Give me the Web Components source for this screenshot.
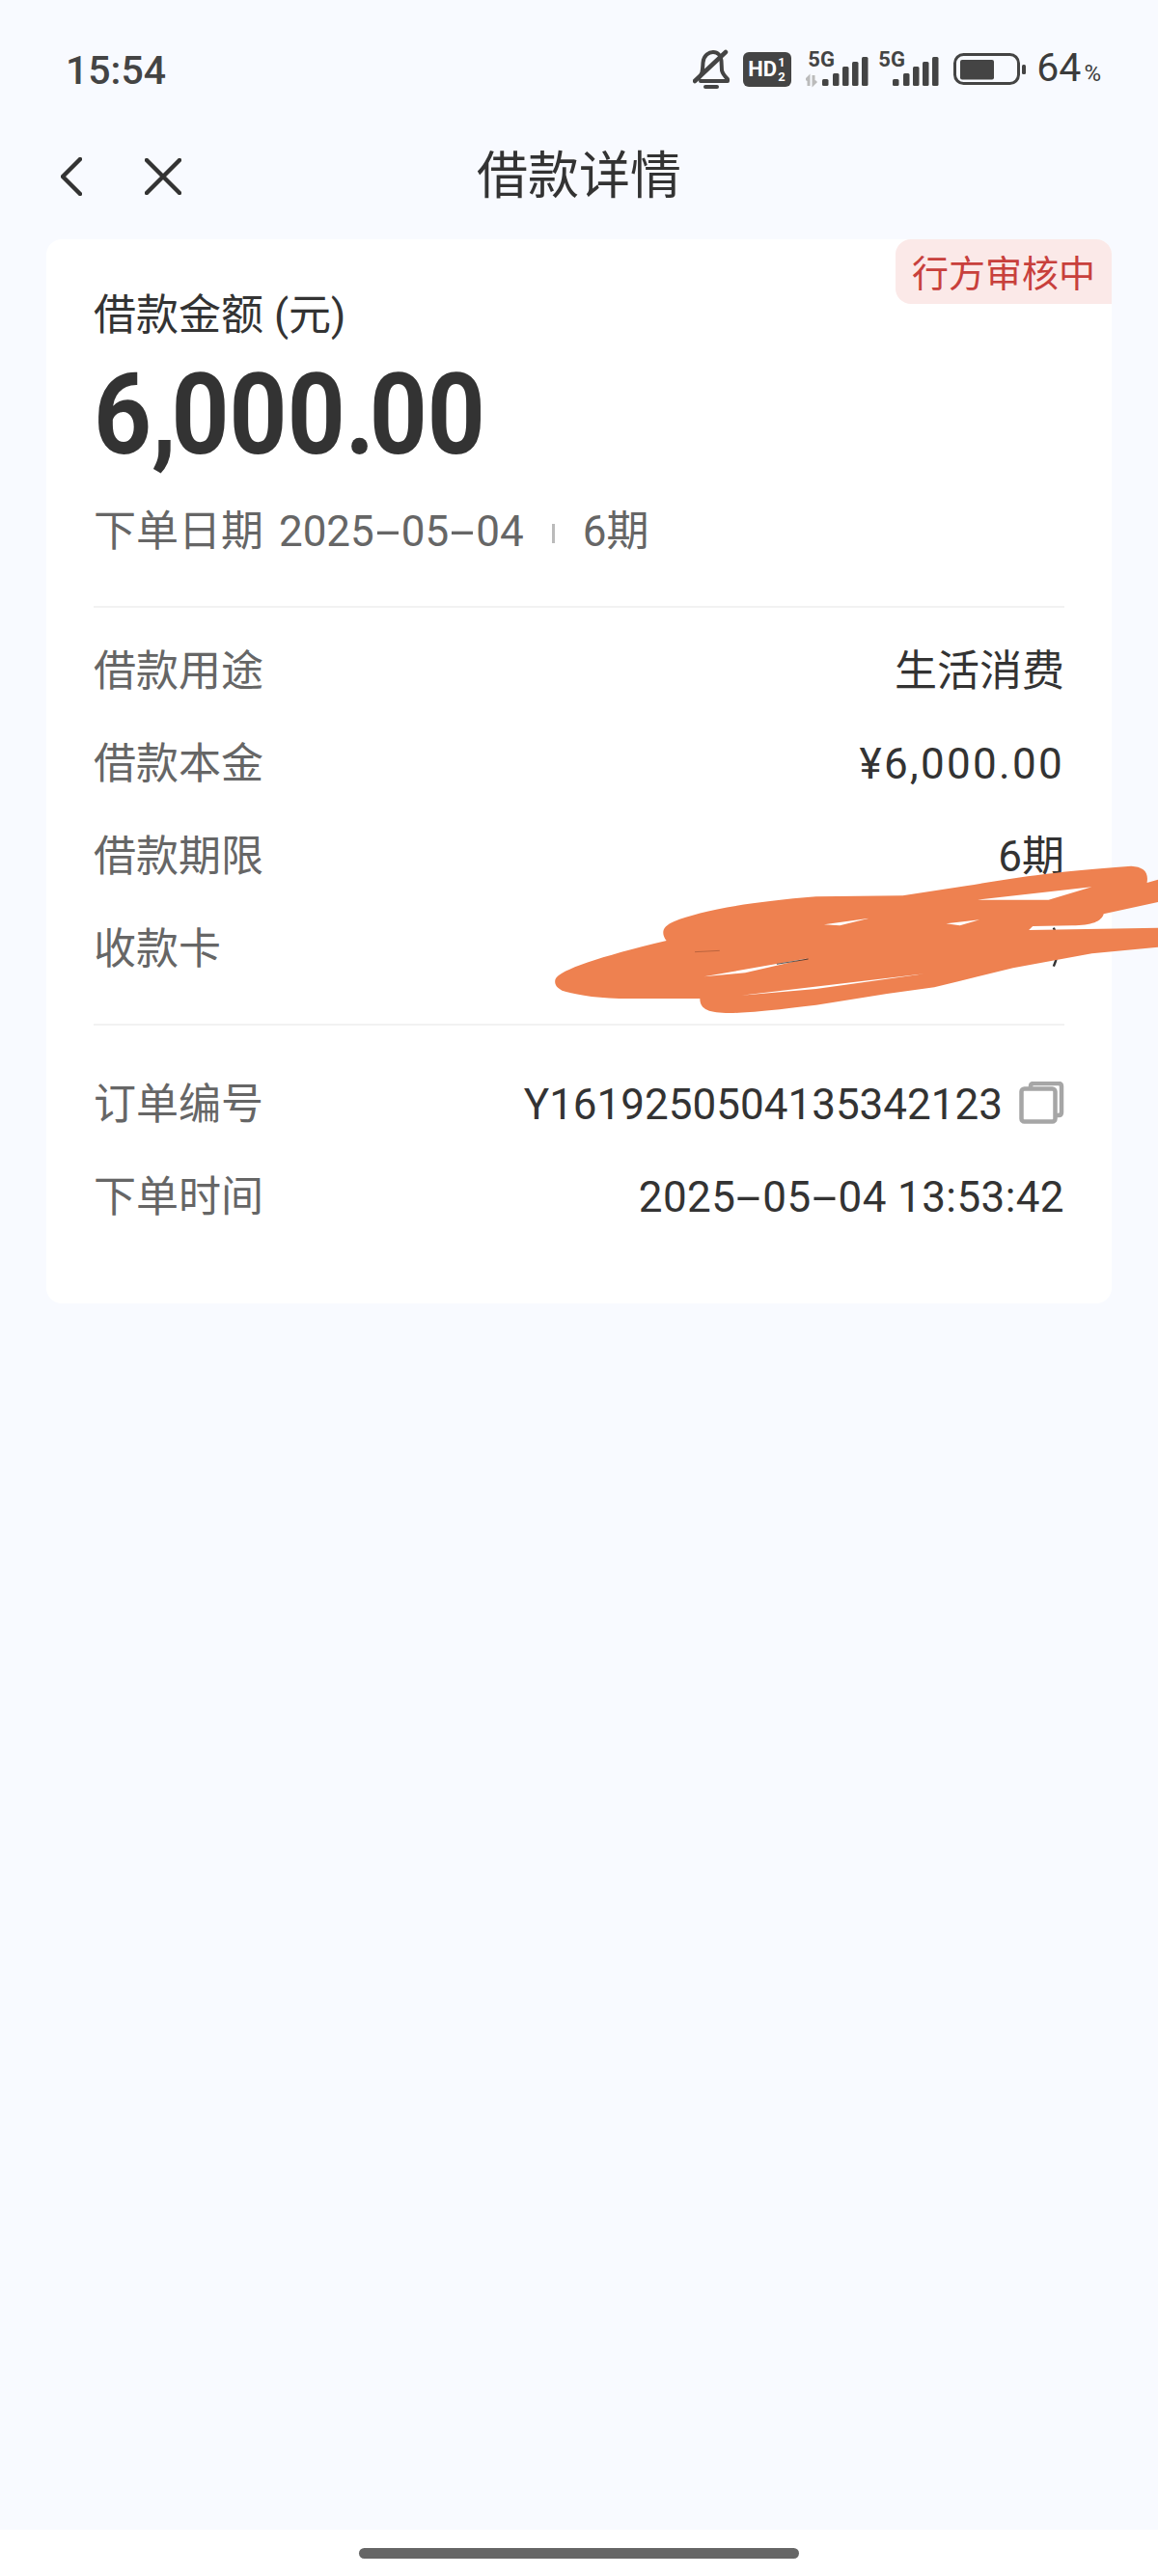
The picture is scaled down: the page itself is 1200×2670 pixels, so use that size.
<!DOCTYPE html>
<html lang="zh">
<head>
<meta charset="utf-8">
<title>借款详情</title>
<style>
	html, body { margin: 0; padding: 0; }
	body {
		width: 1200px;
		height: 2670px;
		overflow: hidden;
		background: #f8faff;
		font-family: Roboto, "Noto Sans CJK SC", sans-serif;
	}
</style>
</head>
<body>
<loan-page></loan-page>

<script>
// wide hyphens like the system font on the phone
const dashes = (text) => text.replace(/-/g, '<span class="h">-</span>');
const dashStyle = `.h { display: inline-block; width: 28px; text-align: center; transform: scaleX(2.1); }`;

class StatusBar extends HTMLElement {
	constructor() {
		super();
		this.attachShadow({ mode: 'open' });
	}

	connectedCallback() {
		const bars = (x) => [[0, 80], [11, 74], [21, 67], [31, 62], [41, 57]]
			.map(([dx, top]) => `<rect x="${x + dx}" y="${top - 50}" width="6.5" height="${87 - top}" rx="1.5"/>`).join('');
		this.shadowRoot.innerHTML = `
			<style>
				:host { display: flex; align-items: center; justify-content: space-between; height: 144px; padding: 0 59px 0 68px; color: #444; }
				.time { font-size: 41px; line-height: 44px; font-weight: 500; color: #444; padding-top: 2px; }
				.icons { display: flex; align-items: center; }
				svg { display: block; fill: #444; }
				.bell { fill: none; stroke: #444; stroke-width: 4; stroke-linecap: round; stroke-linejoin: round; margin-right: 14px; }
				.hd { width: 50px; height: 36px; box-sizing: border-box; background: #444; border-radius: 6px; color: #fff; font: 700 22px/36px Roboto, sans-serif; display: flex; padding-left: 5px; margin-right: 15px; }
				.frac { display: flex; flex-direction: column; font-size: 13px; line-height: 15px; margin: 3px 0 0 1px; }
				.sig { position: relative; width: 71px; height: 40px; }
				.sig b { position: absolute; left: 2px; top: -2px; font: 700 22px/24px Roboto, sans-serif; color: #444; }
				.sig + .sig { width: 65px; margin-left: 2px; }
				.sig svg { position: absolute; left: 0; top: 0; }
				.bat { margin: 0 10px 0 15px; }
				.pct { font-size: 41px; line-height: 44px; color: #3c3c3c; padding-top: 2px; }
				.pct small { font-size: 24px; margin-left: 3px; }
			</style>
			<span class="time">15:54</span>
			<div class="icons">
				<svg class="bell" width="38" height="42" viewBox="0 0 38 42">
					<path d="M6 30 C10 26 10 22 10.500 14 C11 6 17 3 21 3 C26 3 29 7 29.500 12 L30 22 C31 26 33 28 36 31 L36 33 L8 33"/>
					<path d="M2 33 L34 3" stroke-width="4.500"/>
					<path d="M13 39 H25"/>
				</svg>
				<div class="hd">HD<span class="frac"><span>1</span><span>2</span></span></div>
				<div class="sig">
					<b>5G</b>
					<svg width="71" height="40" viewBox="0 0 71 40">
						<path d="M3 37 V28 L0 31 M8 26 V35 L11 32" fill="none" stroke="#bbb" stroke-width="3"/>
						${bars(17)}
					</svg>
				</div>
				<div class="sig">
					<b>5G</b>
					<svg width="65" height="40" viewBox="0 0 65 40">${bars(17)}</svg>
				</div>
				<svg class="bat" width="76" height="34" viewBox="0 0 76 34">
					<rect x="1.500" y="1.500" width="66" height="30" rx="9" fill="none" stroke="#444" stroke-width="3"/>
					<rect x="7" y="7" width="35" height="20.500" rx="2"/>
					<rect x="71" y="12" width="4" height="10" rx="1.500"/>
				</svg>
				<span class="pct">64<small>%</small></span>
			</div>
		`;
	}
}

class NavBar extends HTMLElement {
	constructor() {
		super();
		this.attachShadow({ mode: 'open' });
	}

	connectedCallback() {
		this.shadowRoot.innerHTML = `
			<style>
				:host { display: grid; grid-template-columns: 1fr auto 1fr; align-items: center; height: 74px; padding: 2px 63px 0; margin-bottom: 28px; }
				.left { display: flex; align-items: center; gap: 65px; }
				svg { display: block; fill: none; stroke: #333; stroke-width: 4.500; stroke-linecap: round; stroke-linejoin: round; }
				h1 { margin: 0; font-size: 53px; line-height: 74px; font-weight: 400; color: #333; }
			</style>
			<div class="left">
				<svg width="22" height="40" viewBox="0 0 22 40"><path d="M20 2 L2 20 L20 38"/></svg>
				<svg width="38" height="38" viewBox="0 0 38 38"><path d="M2 2 L36 36 M36 2 L2 36"/></svg>
			</div>
			<h1><slot></slot></h1>
			<span></span>
		`;
	}
}

class DetailRow extends HTMLElement {
	constructor() {
		super();
		this.attachShadow({ mode: 'open' });
	}

	connectedCallback() {
		const label = this.getAttribute('label');
		this.shadowRoot.innerHTML = `
			<style>
				:host { display: flex; justify-content: space-between; align-items: center; height: 96px; box-sizing: border-box; padding-top: 3px; font-size: 44px; line-height: 60px; }
				.label { color: #666; }
				.value { display: flex; align-items: center; color: #333; }
			</style>
			<span class="label">${label}</span>
			<span class="value"><slot></slot></span>
		`;
	}
}

class CopyIcon extends HTMLElement {
	constructor() {
		super();
		this.attachShadow({ mode: 'open' });
	}

	connectedCallback() {
		this.shadowRoot.innerHTML = `
			<style>
				:host { display: block; width: 47px; height: 44px; margin: -3px 0 0 17px; }
				svg { display: block; fill: none; stroke: #a6a6a6; stroke-width: 4.500; stroke-linejoin: round; }
			</style>
			<svg width="47" height="44" viewBox="0 0 47 44">
				<path d="M12 7 V5 Q12 2 15 2 H41 Q44 2 44 5 V32 Q44 35 41 35 H38"/>
				<rect x="2.500" y="7.500" width="35" height="34" rx="3"/>
			</svg>
		`;
	}
}

class DetailCard extends HTMLElement {
	constructor() {
		super();
		this.attachShadow({ mode: 'open' });
	}

	connectedCallback() {
		this.shadowRoot.innerHTML = `
			<style>
				:host { display: block; position: relative; margin: 0 48px; padding: 49px 49px 64px; background: #fff; border-radius: 16px; }
				${dashStyle}
				.badge { position: absolute; top: 0; right: 0; width: 224px; height: 67px; padding-bottom: 3px; box-sizing: border-box; display: flex; align-items: center; justify-content: center; background: #fbe9e8; color: #c8403c; font-size: 38px; border-radius: 16px 16px 0 16px; }
				.label { font-size: 44px; line-height: 60px; color: #333; }
				.amount { height: 120px; margin-top: 13px; font-size: 117px; line-height: 120px; font-weight: 700; color: #333; transform: scaleX(.895); transform-origin: left center; white-space: nowrap; }
				.amount span { letter-spacing: -6px; }
				.sub { display: flex; align-items: center; margin-top: 31px; font-size: 44px; line-height: 60px; color: #666; word-spacing: 5px; }
				.sep { width: 3px; height: 20px; margin: 4px 29px 0 29px; background: #bbb; }
				hr { height: 2px; margin: 0; border: 0; background: #f2f2f2; }
				.first { margin: 47px 0 16px; }
				.second { margin: 31px 0 32px; }
			</style>
			<div class="badge">行方审核中</div>
			<div class="label">借款金额 (元)</div>
			<div class="amount">6<span>,</span>000<span>.</span>00</div>
			<div class="sub"><span>下单日期 ${dashes('2025-05-04')}</span><span class="sep"></span><span>6期</span></div>
			<hr class="first">
			<slot name="loan"></slot>
			<hr class="second">
			<slot name="order"></slot>
		`;
	}
}

class ScribbleMark extends HTMLElement {
	constructor() {
		super();
		this.attachShadow({ mode: 'open' });
	}

	connectedCallback() {
		// hand drawn cover over the card number, points read off the crop
		const outline = 'M38 465 C50 435 150 395 320 345 C305 320 310 300 340 285 C400 255 520 225 700 208 L920 205 L1080 175 C1200 150 1300 130 1500 113 C1530 115 1545 130 1540 165 L1568 155 V225 L1430 262 C1425 285 1400 298 1350 298 L1250 300 L1240 312 L1568 305 V365 L1400 385 L1200 430 L1000 490 L880 510 L700 545 C600 560 520 570 480 570 C430 570 405 560 405 525 L200 525 C130 522 80 510 55 500 C40 490 35 480 38 465 Z';
		const holes = 'M1110 218 L1400 178 L1290 218 Z M720 295 L835 275 L760 298 Z M1030 292 L1115 280 L1065 298 Z M415 457 L680 400 L520 445 Z M510 515 L975 448 L700 495 Z';
		this.shadowRoot.innerHTML = `
			<style>
				:host { display: block; position: absolute; left: 560px; top: 860px; width: 640px; height: 220px; }
				svg { display: block; }
			</style>
			<svg width="640" height="220" viewBox="0 0 1568 660" preserveAspectRatio="none">
				<path d="M1303 305 Q1325 365 1303 425" fill="none" stroke="#333" stroke-width="6"/>
				<path fill-rule="evenodd" fill="#ee8150" d="${outline} ${holes}"/>
				<path d="M600 418 L680 402" stroke="#222" stroke-width="2" fill="none"/>
				<path d="M392 380 L455 376" stroke="#a85a38" stroke-width="2" fill="none"/>
			</svg>
		`;
	}
}

class HomeBar extends HTMLElement {
	constructor() {
		super();
		this.attachShadow({ mode: 'open' });
	}

	connectedCallback() {
		this.shadowRoot.innerHTML = `
			<style>
				:host { display: flex; justify-content: center; height: 48px; padding-top: 19px; box-sizing: border-box; background: #fff; }
				i { display: block; width: 456px; height: 11px; border-radius: 6px; background: #666; }
			</style>
			<i></i>
		`;
	}
}

class LoanPage extends HTMLElement {
	constructor() {
		super();
		this.attachShadow({ mode: 'open' });
	}

	connectedCallback() {
		this.shadowRoot.innerHTML = `
			<style>
				:host { display: flex; flex-direction: column; position: relative; height: 2670px; }
				${dashStyle}
				main { flex: 1; }
				.money { letter-spacing: 2.300px; }
				.when { letter-spacing: .4px; }
			</style>
			<status-bar></status-bar>
			<nav-bar>借款详情</nav-bar>
			<main>
				<detail-card>
					<detail-row slot="loan" label="借款用途">生活消费</detail-row>
					<detail-row slot="loan" label="借款本金"><span class="money">¥6,000.00</span></detail-row>
					<detail-row slot="loan" label="借款期限">6期</detail-row>
					<detail-row slot="loan" label="收款卡"></detail-row>
					<detail-row slot="order" label="订单编号">Y1619250504135342123<copy-icon></copy-icon></detail-row>
					<detail-row slot="order" label="下单时间"><span class="when">${dashes('2025-05-04')} 13:53:42</span></detail-row>
				</detail-card>
			</main>
			<home-bar></home-bar>
			<scribble-mark></scribble-mark>
		`;
	}
}

customElements.define('status-bar', StatusBar);
customElements.define('nav-bar', NavBar);
customElements.define('detail-row', DetailRow);
customElements.define('copy-icon', CopyIcon);
customElements.define('detail-card', DetailCard);
customElements.define('scribble-mark', ScribbleMark);
customElements.define('home-bar', HomeBar);
customElements.define('loan-page', LoanPage);
</script>
</body>
</html>
